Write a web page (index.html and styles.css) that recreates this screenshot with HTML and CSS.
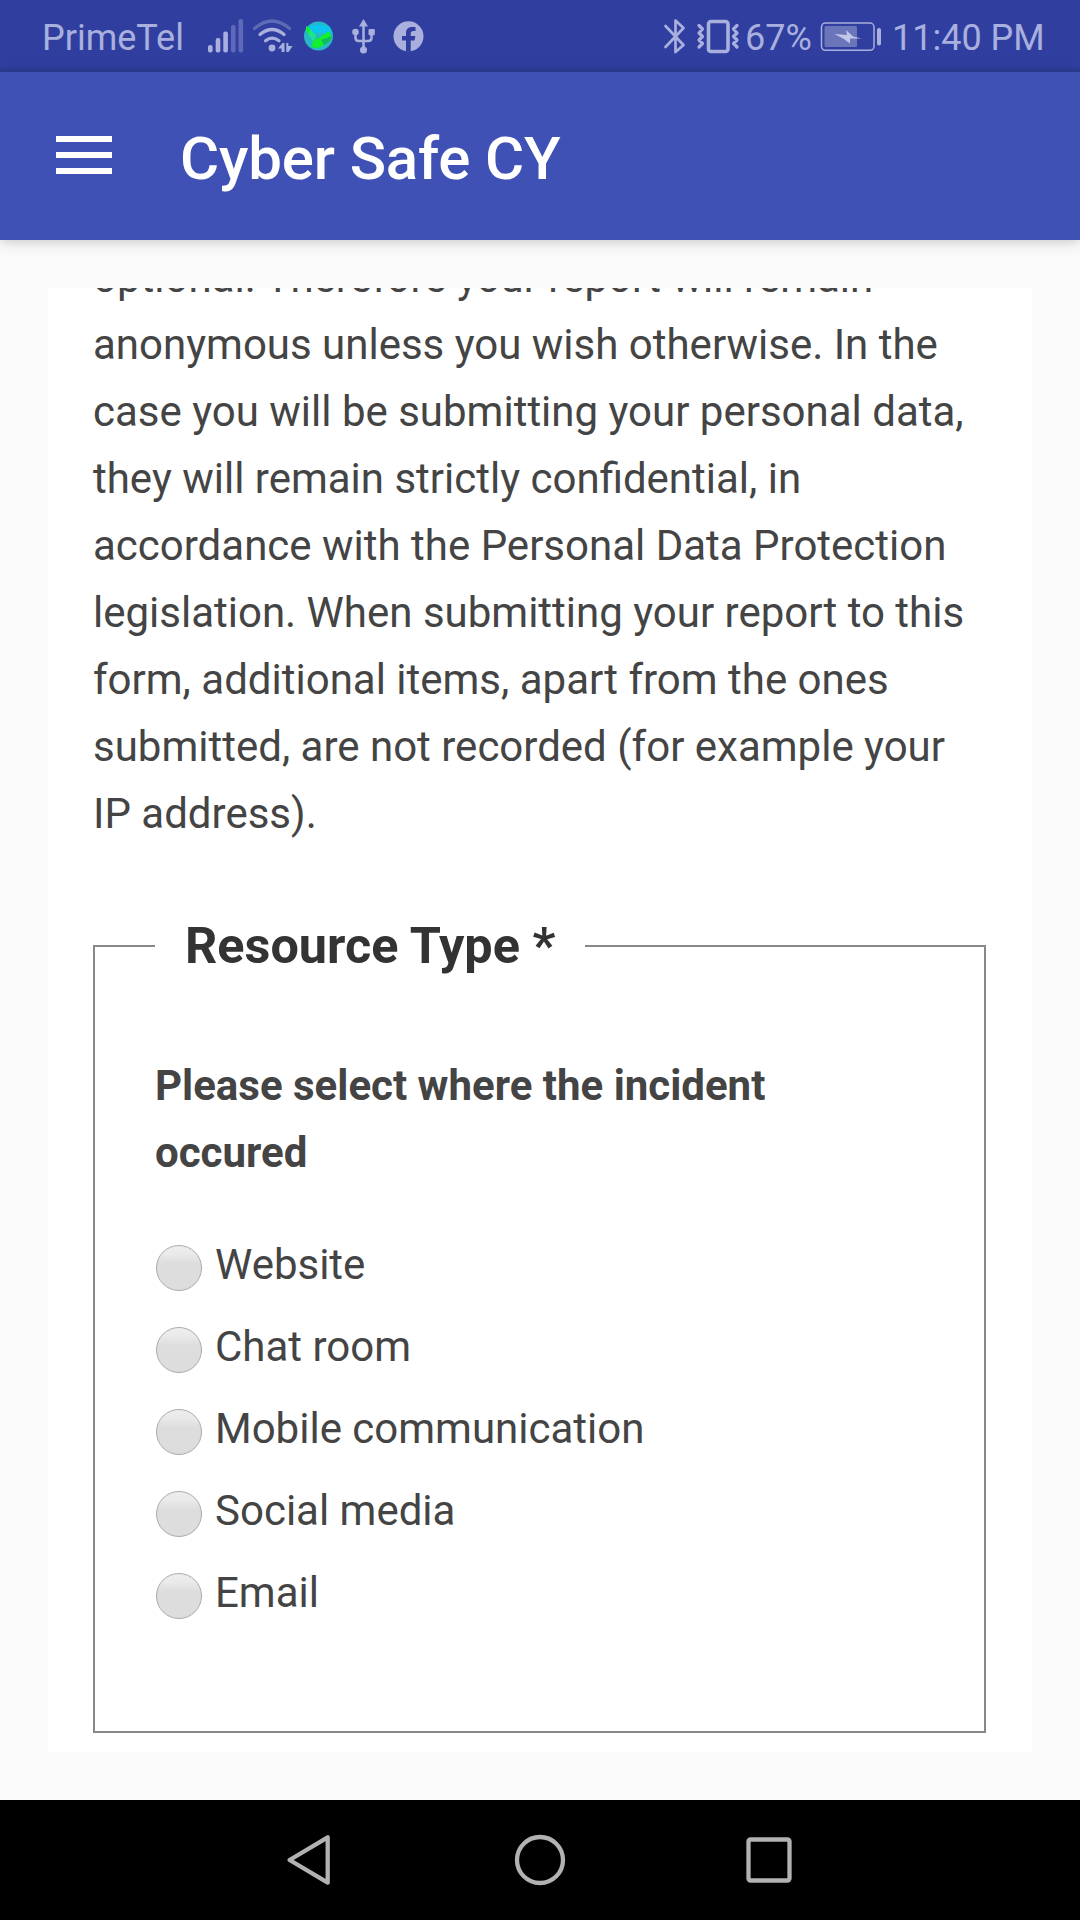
FILE: index.html
```html
<!DOCTYPE html>
<html lang="en">
<head>
<meta charset="utf-8">
<title>Cyber Safe CY</title>
<link rel="stylesheet" href="styles.css">
</head>
<body>
<div class="status">
  <span class="carrier">PrimeTel</span>
  <svg class="status-icons" width="226" height="72" viewBox="202 0 226 72" fill="#a9b0de">
    <rect x="208" y="45" width="4.6" height="7.5" rx="2"/>
    <rect x="215.700" y="38" width="4.600" height="14.500" rx="2"/>
    <rect x="223.300" y="31.500" width="4.600" height="21" rx="2"/>
    <g opacity=".38"><rect x="231" y="25" width="4.600" height="27.500" rx="2"/><rect x="238.500" y="19" width="4.600" height="33.500" rx="2"/></g>
    <g fill="none" stroke="#a9b0de" stroke-linecap="round" stroke-width="3.300">
      <path opacity=".38" d="M254.500 28.500Q272 13.500 289.500 28.500"/>
      <path d="M260 34.500Q272 24.500 284 34.500M265.500 40.800Q272 35.500 279 40.800"/>
    </g>
    <circle cx="272" cy="48" r="3.400"/>
    <path d="M278 48.500L282.500 43H284.500V52H281.600V48.500ZM286.300 43H288.300V46H292.500L288.500 52H286.300Z"/>
    <circle cx="318.500" cy="36" r="14.500" fill="#26b8c4"/>
    <path d="M308 27Q318 22 329 27L332 33L315 33Z" fill="#0cc4f0"/>
    <path d="M306 26L309 28L316 35L314 42L309 36Z" fill="#1be68f"/>
    <path d="M311 47L314 40L319 38L329 31L332 38L324 45L318 48Z" fill="#12f02c"/>
    <path d="M306 26L310 29L309 35L306 30Z" fill="#12f02c"/>
    <path d="M321 40L332 36L330 41L324 45Z" fill="#14b95b"/>
    <g stroke="#a9b0de" stroke-width="2.500" fill="none"><path d="M363.500 25V49M355.500 34V38Q355.500 41 359 41H368Q371.500 41 371.500 38V34"/></g>
    <path d="M363.500 19L368 26.500H359Z"/><circle cx="355.500" cy="32" r="3.300"/><rect x="368.500" y="29" width="6.300" height="6.300" rx="1"/><circle cx="363.500" cy="50" r="3.500"/>
    <circle cx="408.500" cy="36.300" r="15"/>
    <path fill="#303f9f" d="M406 51.500V40.500H402V36H406V33C406 29 408.500 27 412 27H415.500V31H413.300C411.500 31 410.700 32 410.700 33.500V36H415.300L414.600 40.500H410.700V51.500Z"/>
  </svg>
  <svg class="status-right" width="82" height="72" viewBox="661 0 82 72" fill="none" stroke="#a9b0de">
    <path stroke-width="2.700" stroke-linejoin="round" stroke-linecap="round" d="M665.500 26L683.500 45L675.500 52V20.500L683.500 28L665.500 47"/>
    <rect x="708.500" y="21.500" width="19.500" height="30" rx="2.500" stroke-width="3.600"/>
    <path stroke-width="3.200" stroke-linejoin="round" stroke-linecap="round" d="M699 25.500L702.500 29L699 33L702.500 36.500L699 40L702.500 43.500L699 47M737 25.500L733.500 29L737 33L733.500 36.500L737 40L733.500 43.500L737 47"/>
  </svg>
  <span class="percent">67%</span>
  <svg class="battery" width="62" height="72" viewBox="820 0 62 72">
    <rect x="821.500" y="23" width="52.500" height="27.300" rx="4" fill="none" stroke="#a9b0de" stroke-width="1.500"/>
    <rect x="824.500" y="26" width="32.500" height="21" rx="1.500" fill="#6a75ba"/>
    <path fill="#c3c8ea" d="M834.500 34L847 35L846 30L853 36.500L861.500 38.500L850 38.500L850 43.500L843.500 38.800Z"/>
    <rect x="877" y="28" width="4" height="17.500" rx="1.800" fill="#a9b0de"/>
  </svg>
  <span class="clock">11:40 PM</span>
</div>
<header class="appbar">
  <div class="menu"><i></i><i></i><i></i></div>
  <h1>Cyber Safe CY</h1>
</header>
<main class="content">
  <section class="card">
    <p class="intro">optional. Therefore your report will remain<br>anonymous unless you wish otherwise. In the<br>case you will be submitting your personal data,<br>they will remain strictly confidential, in<br>accordance with the Personal Data Protection<br>legislation. When submitting your report to this<br>form, additional items, apart from the ones<br>submitted, are not recorded (for example your<br>IP address).</p>
    <fieldset class="group">
      <legend>Resource Type *</legend>
      <p class="question">Please select where the incident<br>occured</p>
      <div class="options">
        <label class="option"><input type="radio" name="resource"><span>Website</span></label>
        <label class="option"><input type="radio" name="resource"><span>Chat room</span></label>
        <label class="option"><input type="radio" name="resource"><span>Mobile communication</span></label>
        <label class="option"><input type="radio" name="resource"><span>Social media</span></label>
        <label class="option"><input type="radio" name="resource"><span>Email</span></label>
      </div>
    </fieldset>
  </section>
</main>
<nav class="navbar">
  <svg width="46" height="56" viewBox="0 0 46 56"><path d="M4.600 28L42.700 5.300V50.700Z"/></svg>
  <svg width="56" height="56" viewBox="0 0 56 56"><circle cx="28" cy="28" r="23"/></svg>
  <svg width="50" height="56" viewBox="0 0 50 56"><rect x="4.500" y="7.500" width="41" height="41" rx="2"/></svg>
</nav>
</body>
</html>
```
FILE: styles.css
```css
* { box-sizing: border-box; }
body {
  margin: 0;
  width: 1080px;
  height: 1920px;
  display: flex;
  flex-direction: column;
  overflow: hidden;
  background: #fafafa;
  color: #444;
  font-family: Roboto, sans-serif;
  font-size: 42px;
  line-height: 67px;
}
svg { display: block; flex: none; }
p, h1 { margin: 0; }

.status {
  flex: none;
  display: flex;
  height: 72px;
  padding-left: 42px;
  background: linear-gradient(#303f9f 66px, #2c3a92);
  color: #a9b0de;
  font-size: 36px;
  line-height: 76px;
  white-space: nowrap;
}
.carrier { width: 160px; }
.status-right { margin-left: 233px; }
.percent { width: 77px; padding-left: 2px; }
.clock { padding-left: 10px; }

.appbar {
  flex: none;
  display: flex;
  height: 168px;
  padding-left: 56px;
  background: #3f51b5;
  color: #fff;
  box-shadow: 0 2px 12px rgba(0, 0, 0, .2);
}
.menu {
  width: 56px;
  padding-top: 64px;
  display: flex;
  flex-direction: column;
  gap: 10px;
}
.menu i { height: 6px; background: #fff; }
.appbar h1 {
  margin-left: 68px;
  font-size: 60px;
  font-weight: 500;
  letter-spacing: -0.15px;
  line-height: 174px;
}

.content { flex: 1; padding: 48px; }
.card {
  height: 1464px;
  padding: 0 45px;
  background: #fff;
  overflow: hidden;
}
.intro { margin-top: -44px; white-space: nowrap; }

.group {
  width: 893px;
  margin: 66px 0 0;
  padding: 73px 60px 94px;
  border: 2px solid #888;
}
.group legend {
  padding: 0 30px;
  color: #333;
  font-size: 50.4px;
  font-weight: 700;
  line-height: 66px;
}
.question { font-weight: 700; }
.options { margin-top: 41px; }
.option {
  display: flex;
  align-items: center;
  height: 82px;
  padding-left: 1px;
}
.option span { padding-bottom: 8px; }
.option input {
  appearance: none;
  width: 46px;
  height: 46px;
  margin: 0 13px 0 0;
  border: 1px solid #aaa;
  border-radius: 50%;
  background: linear-gradient(#eee, #e9e9e9 20%, #ddd 40%);
}

.navbar {
  flex: none;
  display: flex;
  align-items: center;
  height: 120px;
  padding-left: 285px;
  background: #000;
  fill: none;
  stroke: #b2b2b2;
  stroke-width: 4.300px;
  stroke-linejoin: round;
}
.navbar svg:nth-child(2) { margin-left: 181px; }
.navbar svg:nth-child(3) { margin-left: 176px; }
```
